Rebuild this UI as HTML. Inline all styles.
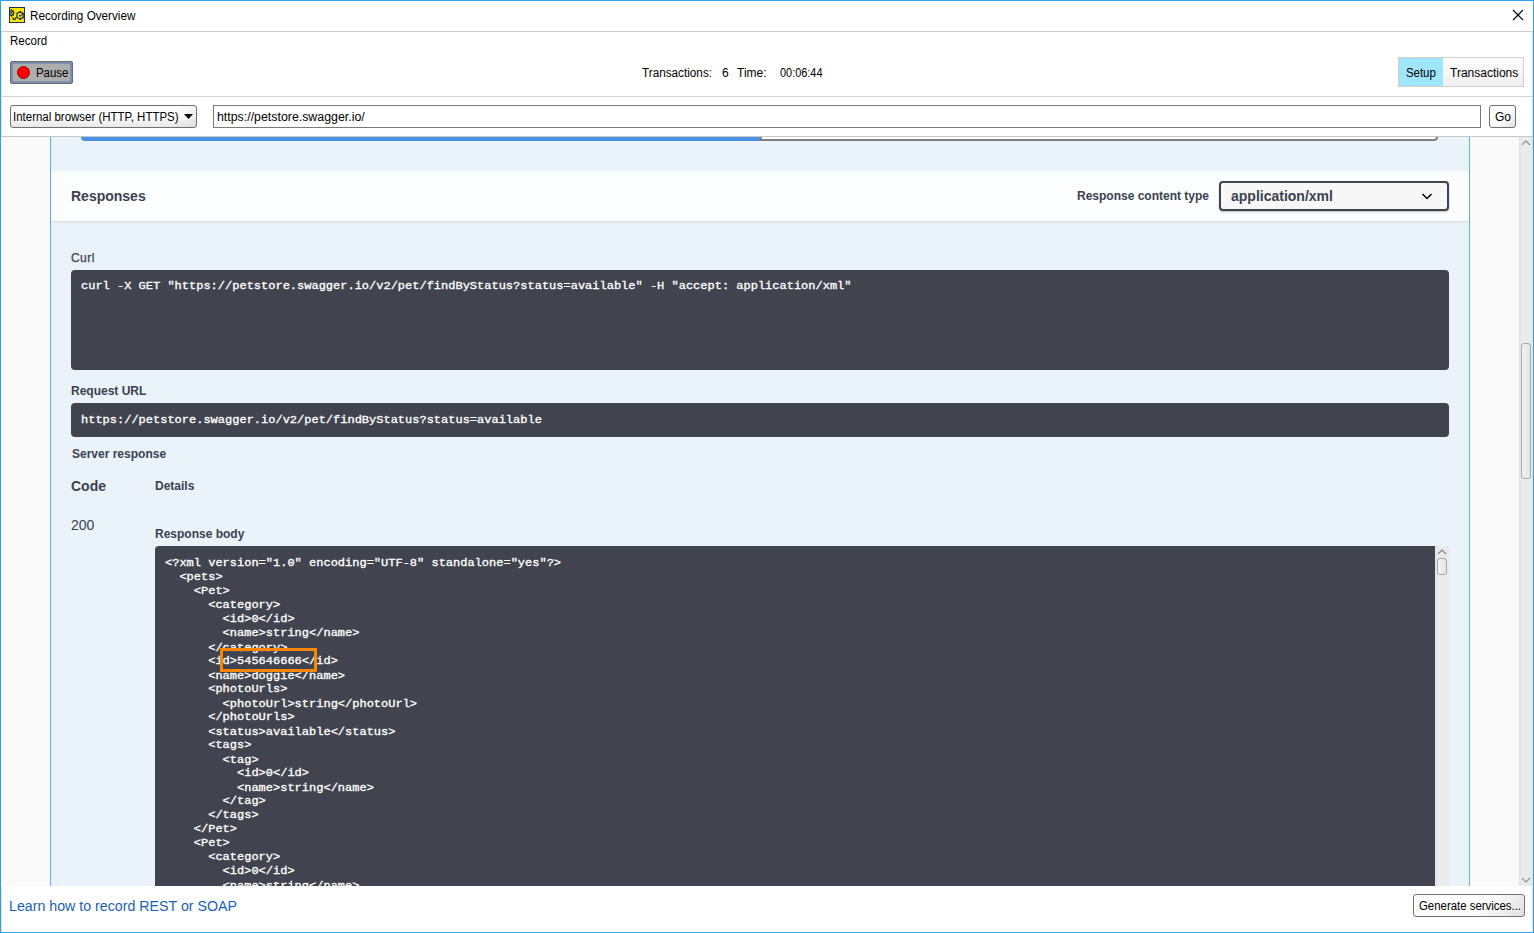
<!DOCTYPE html>
<html><head><meta charset="utf-8">
<style>
*{box-sizing:border-box;margin:0;padding:0}
html,body{width:1534px;height:933px;overflow:hidden;background:#fff}
body{position:relative;font-family:"Liberation Sans",sans-serif;color:#000}
.a{position:absolute}
.t{position:absolute;white-space:pre;line-height:1}
.ui{font-size:12px;transform-origin:0 0}
.sw{color:#3b4151}
.pre{position:absolute;background:#41444e;border-radius:4px}
.mono{font-family:"Liberation Mono",monospace;font-weight:normal;-webkit-text-stroke:0.35px #fff;font-size:12px;color:#fff;white-space:pre;position:absolute;line-height:16.4706px;transform:scaleY(.85);transform-origin:0 0}
</style></head>
<body>
<!-- window frame -->
<div class="a" style="left:0;top:0;width:1534px;height:933px;border:1px solid #2ba3ec;z-index:50;pointer-events:none"></div>

<!-- title bar -->
<svg class="a" style="left:9px;top:7px" width="16" height="16" viewBox="0 0 16 16">
<rect x="0.5" y="0.5" width="15" height="15" fill="#ffe600" stroke="#1b3050" stroke-width="1"/>
<g fill="none" stroke="#1b3050" stroke-width="1.2">
<ellipse cx="2.5" cy="6" rx="1.8" ry="2.3"/>
<path d="M3.7 10.2Q3.8 12.6 5.2 12.6Q6.6 12.6 6.7 10.2"/>
<circle cx="11.1" cy="8.4" r="3.2"/>
<path d="M10.2 8.2L11.3 9.4L13.2 7" stroke-width="1.1"/>
</g>
<g fill="#1b3050">
<rect x="1.8" y="2.2" width="1.3" height="1.4"/><rect x="1.8" y="8.3" width="1.3" height="1.3"/>
<rect x="4.3" y="5.2" width="1.3" height="1.2"/><rect x="3.8" y="7.4" width="1.2" height="1.2"/><rect x="3.9" y="3.3" width="1.1" height="1.1"/>
<circle cx="2.4" cy="5.9" r="0.8"/>
<circle cx="11.1" cy="4.6" r="0.9"/><circle cx="14.3" cy="6.6" r="0.9"/><circle cx="14.1" cy="10.6" r="0.9"/><circle cx="11.2" cy="12.3" r="0.9"/><circle cx="8" cy="10.6" r="0.9"/><circle cx="8.2" cy="6.3" r="0.9"/>
</g>
</svg>
<div class="t" style="left:30px;top:10px;font-size:12px;transform:scaleX(.976);transform-origin:0 0">Recording Overview</div>
<svg class="a" style="left:1512px;top:9px" width="12" height="12" viewBox="0 0 12 12"><path d="M1 1L11 11M11 1L1 11" stroke="#000" stroke-width="1.1"/></svg>
<div class="a" style="left:1px;top:31px;width:1532px;height:1px;background:#cccccc"></div>
<div class="a" style="left:1px;top:32px;width:1px;height:900px;background:#e6dede"></div>
<div class="a" style="left:1532px;top:32px;width:1px;height:900px;background:#e6dede"></div>

<div class="t ui" style="left:10px;top:35px;transform:scaleX(.96)">Record</div>

<!-- pause button -->
<div class="a" style="left:10px;top:61px;width:63px;height:23px;border:1px solid #6a6a6a;border-radius:2px;background:#7d8fb0;padding:2px">
 <div style="width:100%;height:100%;background:#adadad"></div>
</div>
<div class="a" style="left:17px;top:66px;width:13px;height:13px;border-radius:50%;background:#f00;border:1px solid #a00000"></div>
<div class="t ui" style="left:36px;top:67px;transform:scaleX(.95)">Pause</div>

<div class="t ui" style="left:642px;top:67px;transform:scaleX(.978)">Transactions:</div>
<div class="t ui" style="left:722px;top:67px">6</div>
<div class="t ui" style="left:737px;top:67px">Time:</div>
<div class="t ui" style="left:780px;top:67px;transform:scaleX(.91)">00:06:44</div>

<div class="a" style="left:1398px;top:57px;width:126px;height:30px;border:1px solid #cfcfcf;background:linear-gradient(#fcfcfc,#efefef)"></div>
<div class="a" style="left:1399px;top:58px;width:44px;height:28px;background:#9fe5fb"></div>
<div class="t ui" style="left:1406px;top:67px;transform:scaleX(.95)">Setup</div>
<div class="t ui" style="left:1450px;top:67px">Transactions</div>

<div class="a" style="left:1px;top:96px;width:1532px;height:1px;background:#d4d4d4"></div>

<!-- address row -->
<div class="a" style="left:10px;top:105px;width:187px;height:23px;border:1px solid #707070;border-radius:3px;background:linear-gradient(90deg,rgba(0,0,0,0) 88%,rgba(0,0,0,.05)),linear-gradient(#fefefe 45%,#e8e8e8)"></div>
<div class="t ui" style="left:13px;top:111px;transform:scaleX(.956)">Internal browser (HTTP, HTTPS)</div>
<svg class="a" style="left:184px;top:114px" width="10" height="6"><path d="M0 0H9L4.5 5Z" fill="#000"/></svg>
<div class="a" style="left:213px;top:105px;width:1268px;height:23px;border:1px solid #7a7a7a;background:#fff"></div>
<div class="t ui" style="left:217px;top:111px;transform:scaleX(1.03)">https://petstore.swagger.io/</div>
<div class="a" style="left:1489px;top:105px;width:27px;height:23px;border:1px solid #707070;border-radius:3px;background:linear-gradient(135deg,#fdfdfd 50%,#e2e2e2)"></div>
<div class="t ui" style="left:1495px;top:111px">Go</div>

<!-- content area -->
<div class="a" style="left:1px;top:136px;width:1532px;height:1px;background:#c8c8c8"></div>
<div class="a" id="content" style="left:1px;top:137px;width:1518px;height:749px;background:#fafafa;overflow:hidden">
 <div class="a" style="left:49px;top:-10px;width:1420px;height:800px;background:#ebf3fa;border-left:1px solid #61affe;border-right:1px solid #61affe"></div>
 <!-- execute / clear bottoms -->
 <div class="a" style="left:80px;top:-20px;width:680px;height:24px;background:#4990e2;border-radius:0 0 0 4px"></div>
 <div class="a" style="left:759px;top:-20px;width:678px;height:24px;background:#fff;border:2px solid #808080;border-radius:0 0 4px 0"></div>
 <!-- responses header -->
 <div class="a" style="left:50px;top:34px;width:1418px;height:50px;background:#fbfdfe;box-shadow:0 1px 2px rgba(0,0,0,.1)"></div>
</div>

<div class="t sw" style="left:71px;top:189px;font-size:14px;font-weight:bold">Responses</div>
<div class="t sw" style="left:1077px;top:190px;font-size:12px;font-weight:bold">Response content type</div>
<div class="a" style="left:1219px;top:181px;width:230px;height:30px;border:2px solid #41444e;border-radius:4px;background:#f7f7f7;box-shadow:0 1px 2px rgba(0,0,0,.25)"></div>
<div class="t sw" style="left:1231px;top:189px;font-size:14px;font-weight:bold">application/xml</div>
<svg class="a" style="left:1421px;top:192px" width="12" height="9"><path d="M1.5 2L6 6.5L10.5 2" fill="none" stroke="#000" stroke-width="1.5"/></svg>

<div class="t sw" style="left:71px;top:252px;font-size:12px;letter-spacing:.45px;-webkit-text-stroke:.25px #3b4151">Curl</div>
<div class="pre" style="left:71px;top:270px;width:1378px;height:100px"></div>
<div class="mono" style="left:81px;top:279.5px">curl -X GET "https://petstore.swagger.io/v2/pet/findByStatus?status=available" -H "accept: application/xml"</div>

<div class="t sw" style="left:71px;top:385px;font-size:12px;font-weight:bold">Request URL</div>
<div class="pre" style="left:71px;top:403px;width:1378px;height:34px"></div>
<div class="mono" style="left:81px;top:414px">https://petstore.swagger.io/v2/pet/findByStatus?status=available</div>

<div class="t sw" style="left:72px;top:448px;font-size:12px;font-weight:bold">Server response</div>
<div class="t sw" style="left:71px;top:479px;font-size:14px;font-weight:bold">Code</div>
<div class="t sw" style="left:155px;top:480px;font-size:12px;font-weight:bold">Details</div>
<div class="t sw" style="left:71px;top:518px;font-size:14px">200</div>
<div class="t sw" style="left:155px;top:528px;font-size:12px;font-weight:bold">Response body</div>

<div class="a" style="left:155px;top:546px;width:1294px;height:340px;overflow:hidden">
 <div class="a" style="left:0;top:0;width:1280px;height:400px;background:#41444e;border-radius:4px 0 0 0"></div>
 <div class="a" style="left:1280px;top:0;width:14px;height:400px;background:linear-gradient(90deg,#e3e3e3,#ececec 30%,#e9e9e9)"></div>
 <svg class="a" style="left:1281px;top:2px" width="12" height="8"><path d="M2 6L6 2L10 6" fill="none" stroke="#8a8a8a" stroke-width="1.3"/></svg>
 <div class="a" style="left:1282px;top:12px;width:10px;height:17px;border:1px solid #a9a9a9;border-radius:3px;background:linear-gradient(90deg,#f4f4f4,#e4e4e4)"></div>
 <div class="mono" style="left:10px;top:10.5px">&lt;?xml version="1.0" encoding="UTF-8" standalone="yes"?&gt;
  &lt;pets&gt;
    &lt;Pet&gt;
      &lt;category&gt;
        &lt;id&gt;0&lt;/id&gt;
        &lt;name&gt;string&lt;/name&gt;
      &lt;/category&gt;
      &lt;id&gt;545646666&lt;/id&gt;
      &lt;name&gt;doggie&lt;/name&gt;
      &lt;photoUrls&gt;
        &lt;photoUrl&gt;string&lt;/photoUrl&gt;
      &lt;/photoUrls&gt;
      &lt;status&gt;available&lt;/status&gt;
      &lt;tags&gt;
        &lt;tag&gt;
          &lt;id&gt;0&lt;/id&gt;
          &lt;name&gt;string&lt;/name&gt;
        &lt;/tag&gt;
      &lt;/tags&gt;
    &lt;/Pet&gt;
    &lt;Pet&gt;
      &lt;category&gt;
        &lt;id&gt;0&lt;/id&gt;
        &lt;name&gt;string&lt;/name&gt;
      &lt;/category&gt;</div>
</div>
<div class="a" style="left:220px;top:648px;width:97px;height:24px;border:3px solid #ff8400"></div>

<!-- outer scrollbar -->
<div class="a" style="left:1519px;top:137px;width:13px;height:749px;background:linear-gradient(90deg,#e3e3e3,#ececec 30%,#e9e9e9)"></div>
<svg class="a" style="left:1520px;top:139px" width="12" height="8"><path d="M2 6L6 2L10 6" fill="none" stroke="#9a9a9a" stroke-width="1.3"/></svg>
<svg class="a" style="left:1520px;top:876px" width="12" height="8"><path d="M2 2L6 6L10 2" fill="none" stroke="#9a9a9a" stroke-width="1.3"/></svg>
<div class="a" style="left:1521px;top:343px;width:10px;height:136px;border:1px solid #a8a8a8;border-radius:3px;background:linear-gradient(90deg,#f2f2f2,#e6e6e6)"></div>

<!-- footer -->
<div class="t" style="left:9px;top:898.5px;font-size:14px;color:#1b5fb5;transform:scaleX(1.015);transform-origin:0 0">Learn how to record REST or SOAP</div>
<div class="a" style="left:1413px;top:894px;width:112px;height:23px;border:1px solid #707070;border-radius:3px;background:linear-gradient(135deg,#fdfdfd 60%,#e0e0e0)"></div>
<div class="t ui" style="left:1419px;top:900px;transform:scaleX(.95)">Generate services...</div>
</body></html>
